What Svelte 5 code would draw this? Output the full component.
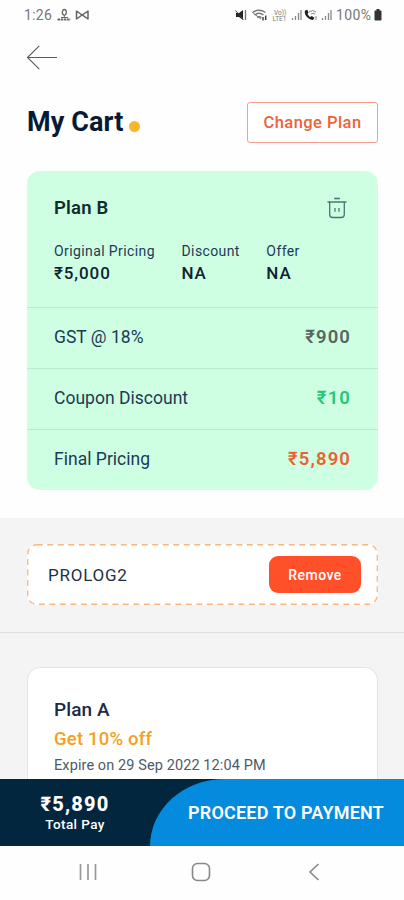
<script lang="ts">
  const summary = [
    { label: "Original Pricing", value: "₹5,000" },
    { label: "Discount", value: "NA" },
    { label: "Offer", value: "NA" },
  ];

  const rows = [
    { label: "GST @ 18%", value: "₹900", tone: "grey" },
    { label: "Coupon Discount", value: "₹10", tone: "green" },
    { label: "Final Pricing", value: "₹5,890", tone: "red" },
  ];
</script>

<div class="screen">
  <header class="status">
    <span class="time">1:26</span>
    <svg class="left-icons" width="34" height="14" viewBox="0 0 34 14" fill="none" stroke="#666">
      <ellipse cx="7.3" cy="4.3" rx="2" ry="2.8" stroke-width="1.3" />
      <path d="M7.3 7v3M4 9.5h7" />
      <path d="M.5 11.6h13" stroke-width="2" stroke-dasharray="2.5 .7" />
      <path d="M19.5 2.5v9M31 2.5v9M19.5 3l5.7 4L31 3M19.5 11l5.7-4 5.8 4" stroke-width="1.5" />
    </svg>
    <svg class="right-icons" width="99" height="14" viewBox="0 0 99 14" fill="none" stroke="#777">
      <path d="M1 5h3l4-3v10L4 9H1z" fill="#222" stroke="none" />
      <path d="M.5 2.5l8 9" stroke="#444" />
      <path d="M10.5 2v10" stroke="#777" stroke-width="1.4" />
      <path d="M17.5 4.5q6.5-4.5 13 0M19.5 7q4.5-3.5 9 0M22 9.5q2.3-1.5 4.5 0" stroke-width="1.4" />
      <path d="M17.5 4.5L26 11" />
      <path d="M28 9v3.5M30.7 7.5v4.5" stroke="#444" stroke-width="1.5" />
      <text x="39" y="6.5">Vo))</text>
      <text x="37.5" y="12.8">LTE1</text>
      <path d="M57.5 12v-2M60.5 12V8M63.5 12V5M66 12V2" stroke="#888" stroke-width="1.3" />
      <path d="M70 2.5c-1.5 4 3.5 9.5 8 9.5l1.5-2.3-2.8-1.7-1.4 1C74 8.2 73 7 72.6 5.7l1-1.2-1.4-2.7z" fill="#222" stroke="none" />
      <path d="M74 4q3.5-3 7 0M76 6q2-1.5 4 0M81 8v4" stroke="#888" />
      <path d="M87.5 12v-2M90.5 12V8M93.5 12V5M96 12V2" stroke="#888" stroke-width="1.3" />
    </svg>
    <span class="percent">100%</span>
    <svg class="battery" width="8" height="12" viewBox="0 0 8 12">
      <path d="M2.5 0h3v1.5h1.2q.8 0 .8.8V10.5q0 1-.8 1H1.3q-.8 0-.8-1V2.3q0-.8.8-.8h1.2z" fill="#333" />
    </svg>
  </header>

  <nav class="back">
    <svg width="32" height="26" viewBox="0 0 32 26" fill="none" stroke="#555b60" stroke-width="1.1">
      <path d="M31 13.5H1.5M13.3 1.8L1.5 13.5l11.8 11.7" />
    </svg>
  </nav>

  <div class="heading">
    <h1>My Cart</h1>
    <i class="dot"></i>
    <button class="change">Change Plan</button>
  </div>

  <section class="cart">
    <div class="plan">
      <div class="plan-top">
        <h2>Plan B</h2>
        <svg width="20" height="22" viewBox="0 0 20 22" fill="none" stroke="#4b7670" stroke-width="1.3">
          <path d="M7.2 1.5h5.6" stroke-width="1.6" />
          <path d="M.5 5h19" stroke-width="1.5" />
          <path d="M2.7 5v12.5q0 3 3 3h8.6q3 0 3-3V5" />
          <path d="M8 11v3.8M12 11v3.8" />
        </svg>
      </div>
      <div class="summary">
        {#each summary as item}
          <div class="cell">
            <span>{item.label}</span>
            <b>{item.value}</b>
          </div>
        {/each}
      </div>
    </div>
    {#each rows as row}
      <div class="row">
        <span>{row.label}</span>
        <b class={row.tone}>{row.value}</b>
      </div>
    {/each}
  </section>

  <main class="lower">
    <div class="coupon-wrap">
      <div class="coupon">
        <svg class="dashes" width="351" height="61" viewBox="0 0 351 61" fill="none">
          <rect x=".75" y=".75" width="349.5" height="59.5" rx="9" stroke="#f6b880" stroke-width="1.3" stroke-dasharray="6 4.5" />
        </svg>
        <span class="code">PROLOG2</span>
        <button class="remove">Remove</button>
      </div>
    </div>
    <article class="offer">
      <h3>Plan A</h3>
      <p class="deal">Get 10% off</p>
      <p class="expiry">Expire on 29 Sep 2022 12:04 PM</p>
    </article>
  </main>

  <footer class="pay">
    <div class="total">
      <b>₹5,890</b>
      <span>Total Pay</span>
    </div>
    <button class="proceed">PROCEED TO PAYMENT</button>
  </footer>

  <div class="system">
    <svg width="18" height="18" viewBox="0 0 18 18" stroke="#999" stroke-width="1.7">
      <path d="M1.5 1v16M9 1v16M16.5 1v16" />
    </svg>
    <svg width="20" height="20" viewBox="0 0 20 20" fill="none" stroke="#888" stroke-width="1.6">
      <rect x="1.5" y="1.5" width="17" height="17" rx="5" />
    </svg>
    <svg width="12" height="18" viewBox="0 0 12 18" fill="none" stroke="#888" stroke-width="1.6">
      <path d="M10.5 1L2 9l8.500 8" />
    </svg>
  </div>
</div>

<style>
  :global(body) {
    margin: 0;
    background: #fff;
  }
  .screen {
    width: 404px;
    height: 900px;
    overflow: hidden;
    display: flex;
    flex-direction: column;
    background: #fefefe;
    font-family: Roboto, "Noto Sans", sans-serif;
    color: #1c3a55;
    white-space: nowrap;
  }
  h1,
  h2,
  h3,
  p {
    margin: 0;
  }
  svg {
    display: block;
    flex: none;
  }
  button {
    font-family: inherit;
    padding: 0;
    border: none;
  }
  .status {
    height: 30px;
    box-sizing: border-box;
    padding: 0 22px 0 24px;
    display: flex;
    align-items: center;
    font-size: 14px;
    color: #777;
  }
  .time {
    width: 33px;
    letter-spacing: 0.3px;
  }
  .right-icons {
    margin-left: auto;
  }
  .right-icons text {
    font-size: 6.5px;
    fill: #777;
    stroke: none;
  }
  .percent {
    width: 36px;
    margin: 0 2px;
    letter-spacing: 0.4px;
  }
  .back {
    height: 54px;
    padding-left: 26px;
    display: flex;
    align-items: center;
  }
  .heading {
    height: 87px;
    box-sizing: border-box;
    padding: 18px 26px 28px 27px;
    display: flex;
    align-items: center;
  }
  h1 {
    font-size: 27px;
    line-height: 41px;
    font-weight: 700;
    letter-spacing: 0.1px;
    color: #071a35;
  }
  .dot {
    width: 11px;
    height: 11px;
    margin: 7px 0 0 6px;
    border-radius: 50%;
    background: #fdb52b;
  }
  .change {
    width: 131px;
    height: 41px;
    margin-left: auto;
    border: 1.5px solid #fb9d8c;
    border-radius: 3px;
    background: #fff;
    color: #f0613a;
    font-size: 16.5px;
    font-weight: 500;
    letter-spacing: 0.45px;
  }
  .cart {
    height: 319px;
    margin: 0 26px 28px 27px;
    flex: none;
    border-radius: 13px;
    background: #ceffe2;
  }
  .plan {
    height: 136px;
    box-sizing: border-box;
    padding: 26px 31px 0 27px;
  }
  .plan-top {
    display: flex;
    justify-content: space-between;
    align-items: center;
    height: 22px;
  }
  h2 {
    font-size: 18.5px;
    line-height: 22px;
    font-weight: 600;
    letter-spacing: 0.2px;
    color: #122b2b;
  }
  .summary {
    display: flex;
    gap: 26.5px;
    margin-top: 22px;
  }
  .cell {
    display: flex;
    flex-direction: column;
    font-size: 14px;
    line-height: 20px;
    letter-spacing: 0.4px;
  }
  .cell b {
    font-size: 17px;
    line-height: 24px;
    font-weight: 500;
    letter-spacing: 0.9px;
    color: #123;
  }
  .row {
    height: 61px;
    box-sizing: border-box;
    padding: 0 27px 3px 27px;
    border-top: 1px solid #b9e9ce;
    display: flex;
    align-items: center;
    justify-content: space-between;
    font-size: 17.5px;
    letter-spacing: 0.02px;
  }
  .row b {
    font-size: 18.5px;
    font-weight: 600;
    letter-spacing: 1.1px;
  }
  .grey {
    color: #5a6462;
  }
  .green {
    color: #22c977;
  }
  .red {
    color: #ee5f36;
  }
  .lower {
    flex: 1;
    min-height: 0;
    overflow: hidden;
    background: #f4f4f4;
  }
  .coupon-wrap {
    padding: 26px 26px 27px 27px;
    border-bottom: 1px solid #dedede;
  }
  .coupon {
    position: relative;
    height: 61px;
    box-sizing: border-box;
    padding: 0 17px 0 21px;
    display: flex;
    align-items: center;
    justify-content: space-between;
    background: #fff;
    border-radius: 10px;
  }
  .dashes {
    position: absolute;
    inset: 0;
  }
  .code {
    padding-top: 1px;
    font-size: 17px;
    letter-spacing: 0.75px;
    color: #1d2f45;
  }
  .remove {
    width: 92px;
    height: 37px;
    border-radius: 9px;
    background: #ff5029;
    color: #fff;
    font-size: 14px;
    font-weight: 500;
    letter-spacing: 0.5px;
  }
  .offer {
    height: 200px;
    margin: 34px 26px 0 27px;
    padding: 28px 26px;
    border: 1px solid #e3e3e3;
    border-radius: 13px;
    background: #fff;
  }
  h3 {
    font-size: 19px;
    line-height: 28px;
    font-weight: 500;
    letter-spacing: 0.1px;
    color: #1b2b45;
  }
  .deal {
    font-size: 18.5px;
    line-height: 30px;
    font-weight: 500;
    letter-spacing: 0.2px;
    color: #f6a021;
  }
  .expiry {
    font-size: 14.5px;
    line-height: 23px;
    letter-spacing: 0.1px;
    color: #4c5b6b;
  }
  .pay {
    height: 67px;
    flex: none;
    display: flex;
    background: #03263f;
    color: #fff;
  }
  .total {
    width: 150px;
    padding-top: 1px;
    box-sizing: border-box;
    display: flex;
    flex-direction: column;
    align-items: center;
    justify-content: center;
  }
  .total b {
    font-size: 20px;
    line-height: 22px;
    font-weight: 800;
    letter-spacing: 1.2px;
  }
  .total span {
    font-size: 13.5px;
    line-height: 18px;
    font-weight: 500;
    letter-spacing: 0.4px;
  }
  .proceed {
    flex: 1;
    padding-left: 18px;
    border-radius: 75px 0 0 0 / 67px 0 0 0;
    background: #048bdd;
    color: #fff;
    font-size: 18px;
    font-weight: 600;
    letter-spacing: 0.18px;
  }
  .system {
    height: 54px;
    flex: none;
    box-sizing: border-box;
    padding: 0 84px 2px 79px;
    display: grid;
    grid-template-columns: 112px 1fr auto;
    align-items: center;
    background: #fefefe;
  }
</style>
